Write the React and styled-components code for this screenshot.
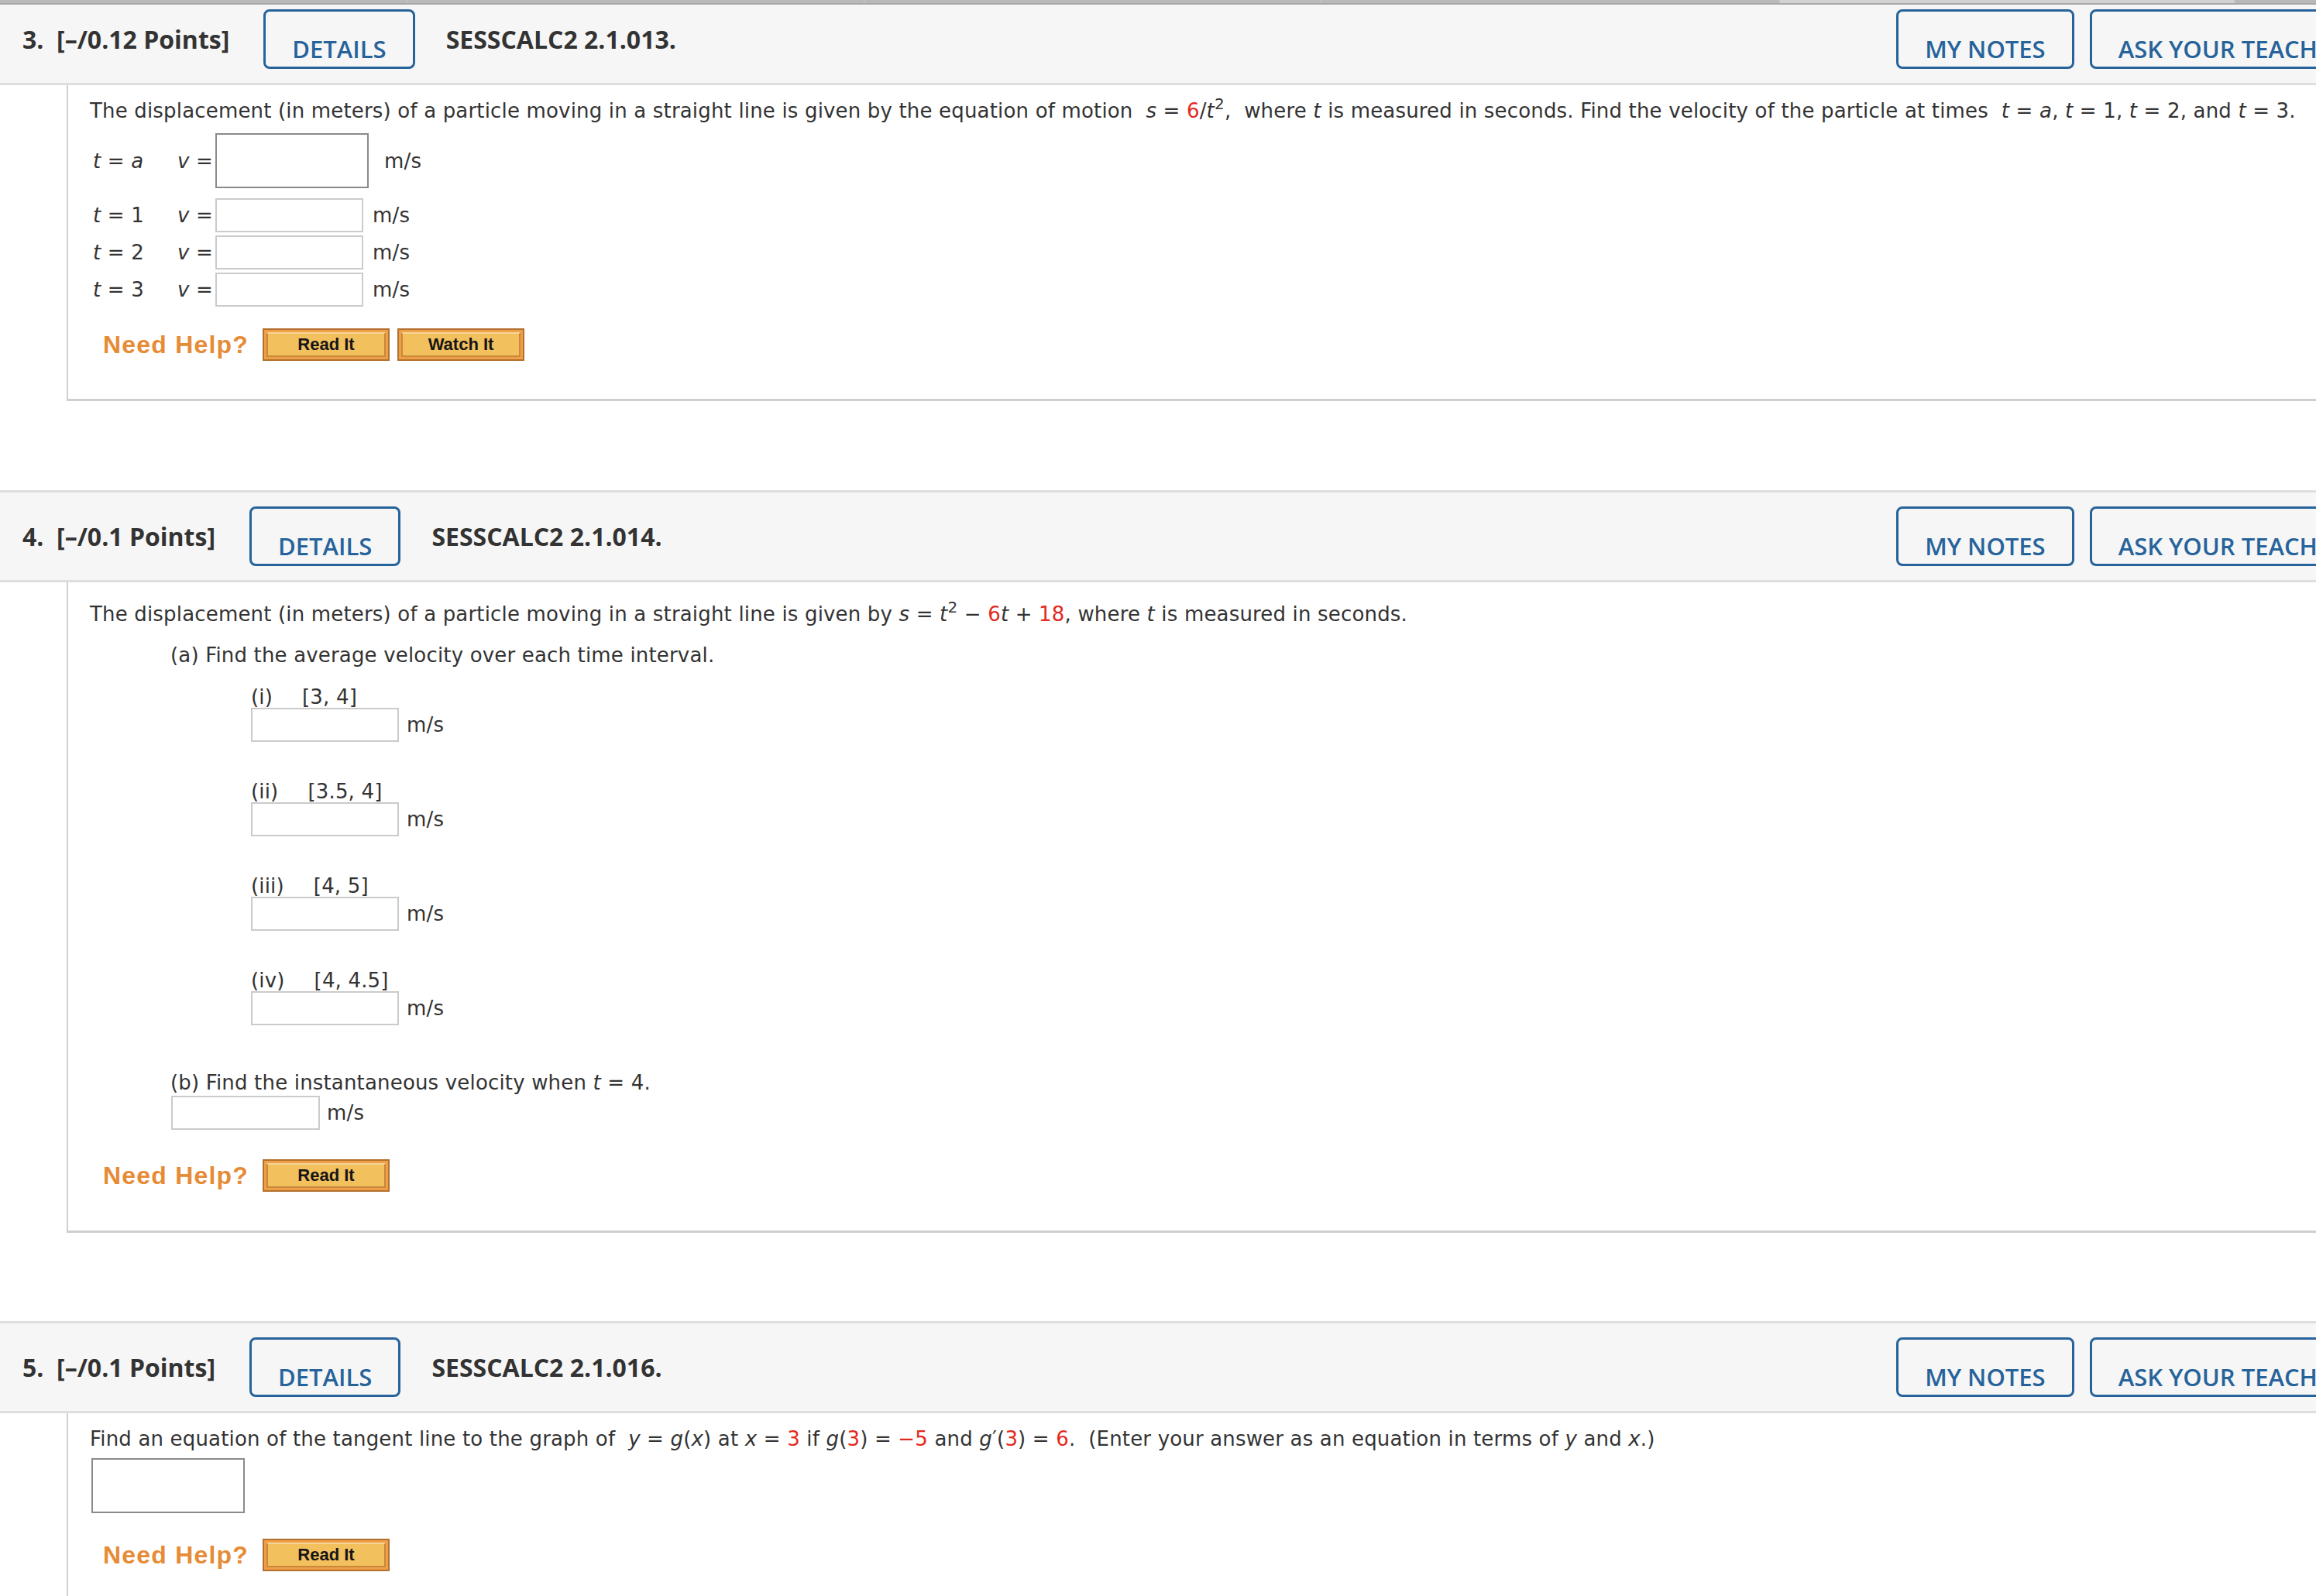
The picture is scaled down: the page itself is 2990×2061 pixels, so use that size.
import React from 'react'
import styled, { createGlobalStyle } from 'styled-components'

const GlobalStyle = createGlobalStyle`
  html, body {
    margin: 0;
    padding: 0;
    background: #fff;
    overflow: hidden;
  }
  body {
    font-family: "DejaVu Sans", Verdana, sans-serif;
    color: #333;
  }
`

const Page = styled.div`
  width: 3100px;
  background: #fff;
`

const TopStrip = styled.div`
  display: flex;
  height: 4px;
  border-bottom: 2px solid #a8a8a8;
  background: #b9b9b9;
`

const StripSeg = styled.div`
  flex-shrink: 0;
  width: ${({ $w }) => $w}px;
  border-right: 1px solid #cacaca;
  background: ${({ $light }) => ($light ? '#d2d2d2' : '#b9b9b9')};
`

const Question = styled.section`
  margin-top: ${({ $gap }) => $gap}px;
`

const Header = styled.div`
  display: flex;
  align-items: center;
  box-sizing: border-box;
  height: ${({ $clip }) => ($clip ? 104 : 119)}px;
  padding: 0 0 ${({ $clip }) => ($clip ? 12 : 0)}px 29px;
  background: #f6f6f6;
  border-top: ${({ $clip }) => ($clip ? 'none' : '3px solid #dedede')};
  border-bottom: 3px solid #dedede;
  font-family: "Open Sans", "Liberation Sans", sans-serif;
`

const Points = styled.div`
  font-size: 32px;
  font-weight: 700;
  color: #333;
  margin-right: 44px;
  white-space: nowrap;
`

const Code = styled.div`
  font-size: 32px;
  font-weight: 700;
  color: #333;
  margin-left: 40px;
  white-space: nowrap;
`

const OutlineButton = styled.button`
  box-sizing: border-box;
  height: 77px;
  padding: 25px 34px 0;
  border: 3px solid #27639b;
  border-radius: 8px;
  background: transparent;
  color: #27639b;
  font-family: "Open Sans", "Liberation Sans", sans-serif;
  font-size: 31px;
  font-weight: 600;
  line-height: 31px;
  white-space: nowrap;
`

const HeaderActions = styled.div`
  display: flex;
  gap: 20px;
  margin-left: auto;
  padding-right: 34px;
`

const Body = styled.div`
  margin-left: 86px;
  border-left: 2px solid #cfcfcf;
  border-bottom: 3px solid #cfcfcf;
  padding: ${({ $top }) => $top}px 0 ${({ $bottom }) => $bottom}px 28px;
  font-size: 26px;
  line-height: 34px;
  letter-spacing: 0.17px;
  color: #333;
`

const Prompt = styled.div`
  white-space: nowrap;
`

const V = styled.i`
  font-style: italic;
`

const Red = styled.span`
  color: #e4281e;
`

const Sup = styled.sup`
  font-size: 20px;
  line-height: 0;
  vertical-align: 11px;
`

const AnswerRow = styled.div`
  display: flex;
  align-items: center;
  margin-top: ${({ $mt }) => $mt}px;
  padding-left: 4px;
`

const VarLabel = styled.span`
  width: 109px;
  flex-shrink: 0;
`

const EqLabel = styled.span`
  width: 49px;
  flex-shrink: 0;
`

const AnswerBox = styled.div`
  box-sizing: border-box;
  flex-shrink: 0;
  width: ${({ $lg, $w }) => $w || ($lg ? 198 : 191)}px;
  height: ${({ $lg }) => ($lg ? 71 : 44)}px;
  border: 2px solid ${({ $lg }) => ($lg ? '#8a8a8a' : '#cbcbcb')};
  background: #fff;
`

const Unit = styled.span`
  margin-left: ${({ $gap }) => $gap}px;
`

const PartLine = styled.div`
  margin-top: ${({ $mt }) => $mt}px;
  padding-left: ${({ $indent }) => $indent}px;
  white-space: nowrap;
`

const Item = styled.div`
  margin-top: ${({ $mt }) => $mt}px;
  padding-left: 208px;
`

const ItemLabel = styled.div`
  line-height: 28px;
  white-space: nowrap;
`

const Interval = styled.span`
  margin-left: 38px;
`

const InputLine = styled.div`
  display: flex;
  align-items: center;
  margin-top: ${({ $mt }) => $mt || 0}px;
  padding-left: ${({ $indent }) => $indent || 0}px;
`

const HelpRow = styled.div`
  display: flex;
  align-items: center;
  gap: 10px;
  margin-top: ${({ $mt }) => $mt}px;
  padding-left: 17px;
`

const HelpText = styled.span`
  font-family: "Liberation Sans", Arial, sans-serif;
  font-size: 32px;
  font-weight: 700;
  letter-spacing: 1.2px;
  color: #e68b36;
  margin-right: 8px;
`

const HelpButton = styled.button`
  box-sizing: border-box;
  width: 164px;
  height: 42px;
  padding: 3px;
  border: 2px solid #b3702e;
  background: #ef9f45;
  cursor: pointer;
`

const HelpFace = styled.span`
  box-sizing: border-box;
  display: flex;
  align-items: center;
  justify-content: center;
  height: 100%;
  border: 2px solid #c9883c;
  border-top-color: #f6d597;
  background: #f3c05e;
  font-family: "Liberation Sans", Arial, sans-serif;
  font-size: 22px;
  font-weight: 700;
  color: #151515;
`

function QuestionHeader({ num, points, code, clip }) {
  return (
    <Header $clip={clip}>
      <Points>{num}.&nbsp; [–/{points} Points]</Points>
      <OutlineButton>DETAILS</OutlineButton>
      <Code>{code}</Code>
      <HeaderActions>
        <OutlineButton>MY NOTES</OutlineButton>
        <OutlineButton>ASK YOUR TEACHER</OutlineButton>
      </HeaderActions>
    </Header>
  )
}

function NeedHelp({ mt, watch }) {
  return (
    <HelpRow $mt={mt}>
      <HelpText>Need Help?</HelpText>
      <HelpButton><HelpFace>Read It</HelpFace></HelpButton>
      {watch && <HelpButton><HelpFace>Watch It</HelpFace></HelpButton>}
    </HelpRow>
  )
}

const intervals = [
  { label: '(i)', range: '[3, 4]' },
  { label: '(ii)', range: '[3.5, 4]' },
  { label: '(iii)', range: '[4, 5]' },
  { label: '(iv)', range: '[4, 4.5]' },
]

export default function App() {
  return (
    <Page>
      <GlobalStyle />
      <TopStrip>
        <StripSeg $w={525} />
        <StripSeg $w={589} />
        <StripSeg $w={589} />
        <StripSeg $w={591} />
        <StripSeg $w={586} $light />
        <StripSeg $w={220} />
      </TopStrip>

      <Question $gap={0}>
        <QuestionHeader num={3} points="0.12" code="SESSCALC2 2.1.013." clip />
        <Body $top={16} $bottom={49}>
          <Prompt>
            The displacement (in meters) of a particle moving in a straight line is given by the equation of motion&nbsp; <V>s</V> = <Red>6</Red>/<V>t</V><Sup>2</Sup>,&nbsp; where <V>t</V> is measured in seconds. Find the velocity of the particle at times&nbsp; <V>t</V> = <V>a</V>, <V>t</V> = 1, <V>t</V> = 2, and <V>t</V> = 3.
          </Prompt>
          <AnswerRow $mt={12}>
            <VarLabel><V>t</V> = <V>a</V></VarLabel>
            <EqLabel><V>v</V> =</EqLabel>
            <AnswerBox $lg />
            <Unit $gap={20}>m/s</Unit>
          </AnswerRow>
          {[1, 2, 3].map((n, i) => (
            <AnswerRow key={n} $mt={i === 0 ? 13 : 4}>
              <VarLabel><V>t</V> = {n}</VarLabel>
              <EqLabel><V>v</V> =</EqLabel>
              <AnswerBox />
              <Unit $gap={12}>m/s</Unit>
            </AnswerRow>
          ))}
          <NeedHelp mt={28} watch />
        </Body>
      </Question>

      <Question $gap={115}>
        <QuestionHeader num={4} points="0.1" code="SESSCALC2 2.1.014." />
        <Body $top={24} $bottom={50}>
          <Prompt>
            The displacement (in meters) of a particle moving in a straight line is given by <V>s</V> = <V>t</V><Sup>2</Sup> − <Red>6</Red><V>t</V> + <Red>18</Red>, where <V>t</V> is measured in seconds.
          </Prompt>
          <PartLine $mt={19} $indent={104}>(a) Find the average velocity over each time interval.</PartLine>
          {intervals.map((it, i) => (
            <Item key={it.label} $mt={i === 0 ? 23 : 50}>
              <ItemLabel>{it.label}<Interval>{it.range}</Interval></ItemLabel>
              <InputLine>
                <AnswerBox />
                <Unit $gap={10}>m/s</Unit>
              </InputLine>
            </Item>
          ))}
          <PartLine $mt={57} $indent={104}>(b) Find the instantaneous velocity when <V>t</V> = 4.</PartLine>
          <InputLine $indent={105}>
            <AnswerBox $w={192} />
            <Unit $gap={9}>m/s</Unit>
          </InputLine>
          <NeedHelp mt={38} />
        </Body>
      </Question>

      <Question $gap={114}>
        <QuestionHeader num={5} points="0.1" code="SESSCALC2 2.1.016." />
        <Body $top={16} $bottom={60}>
          <Prompt>
            Find an equation of the tangent line to the graph of&nbsp; <V>y</V> = <V>g</V>(<V>x</V>) at <V>x</V> = <Red>3</Red> if <V>g</V>(<Red>3</Red>) = <Red>−5</Red> and <V>g</V>′(<Red>3</Red>) = <Red>6</Red>.&nbsp; (Enter your answer as an equation in terms of <V>y</V> and <V>x</V>.)
          </Prompt>
          <InputLine $mt={8} $indent={2}>
            <AnswerBox $lg />
          </InputLine>
          <NeedHelp mt={33} />
        </Body>
      </Question>
    </Page>
  )
}
